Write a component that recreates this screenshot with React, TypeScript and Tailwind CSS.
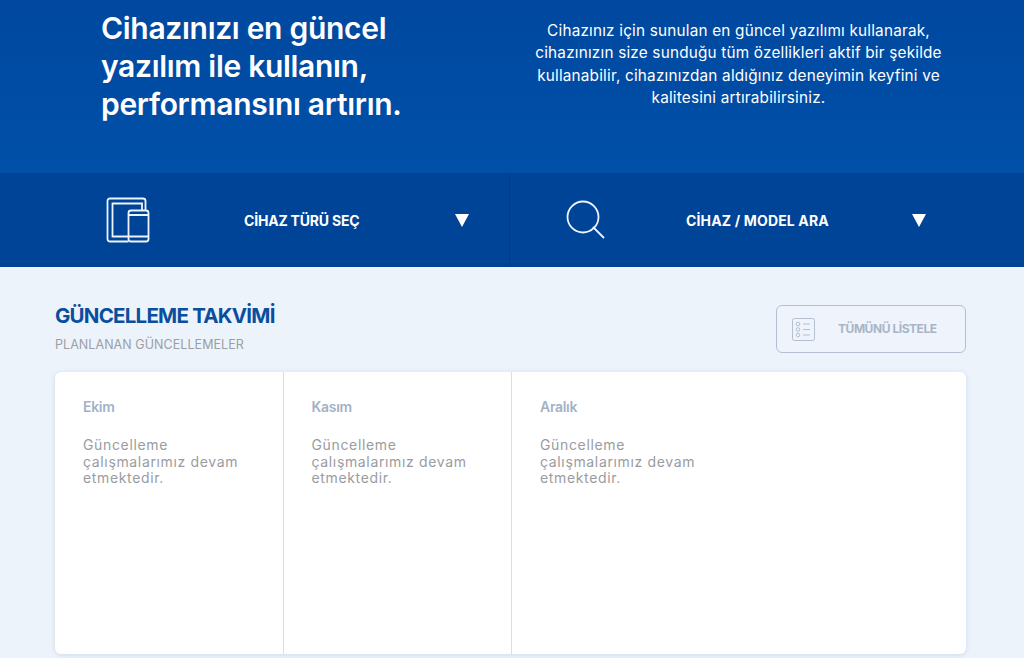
const fontStack = "font-['Inter','Noto_Sans',sans-serif]";

const TabletPhoneIcon = () => (
  <svg width="44" height="46" viewBox="0 0 44 46" fill="none" stroke="#eef4fc" strokeWidth="1.800" className="shrink-0">
    <path d="M22.500 44.500H4a2.500 2.500 0 0 1-2.500-2.500V4A2.500 2.500 0 0 1 4 1.500h33A2.500 2.500 0 0 1 39.500 4v9.500"/>
    <path d="M22.500 39.500H6.500V6.500h29.500v7"/>
    <rect x="22.500" y="13.500" width="20" height="31" rx="2.500"/>
    <path d="M22.500 18h20M22.500 39.500h20"/>
  </svg>
);

const SearchIcon = () => (
  <svg width="40" height="40" viewBox="0 0 40 40" fill="none" stroke="#eef4fc" strokeWidth="1.800" className="shrink-0">
    <circle cx="17" cy="17" r="15.500"/>
    <path d="M27.500 27.500l10 10" strokeLinecap="round"/>
  </svg>
);

const ListIcon = () => (
  <svg width="23" height="23" viewBox="0 0 23 23" fill="none" stroke="#b4bfcf" strokeWidth="1" className="shrink-0">
    <rect x="0.500" y="0.500" width="22" height="22" rx="2"/>
    <circle cx="6" cy="6" r="1.800"/>
    <circle cx="6" cy="11.500" r="1.800"/>
    <circle cx="6" cy="17" r="1.800"/>
    <path d="M11 6h7M11 11.500h7M11 17h7"/>
  </svg>
);

const Triangle = () => (
  <div className="w-0 h-0 border-l-[7.500px] border-r-[7.500px] border-t-[13px] border-l-transparent border-r-transparent border-t-white"/>
);

const months = ["Ekim", "Kasım", "Aralık"];

export default function App() {
  return (
    <div className={`h-[658px] w-[1024px] overflow-hidden bg-[#edf3fb] ${fontStack}`}>
      <header className="h-[173px] bg-gradient-to-b from-[#0048a0] to-[#0050a8] flex text-white">
        <h1 className="ml-[101px] mt-[9px] w-[400px] text-[30px] leading-[38px] font-semibold tracking-[-0.3px]">
          Cihazınızı en güncel<br/>yazılım ile kullanın,<br/>performansını artırın.
        </h1>
        <p className="ml-[7.500px] mt-[20px] w-[460px] text-center text-[15.300px] leading-[22.400px] tracking-[0.2px]">
          Cihazınız için sunulan en güncel yazılımı kullanarak,<br/>
          cihazınızın size sunduğu tüm özellikleri aktif bir şekilde<br/>
          kullanabilir, cihazınızdan aldığınız deneyimin keyfini ve<br/>
          kalitesini artırabilirsiniz.
        </p>
      </header>

      <nav className="h-[94px] bg-[#004497] flex text-white text-[14px] font-bold">
        <div className="w-[510px] flex items-center pl-[106px] border-r border-[#003c88]">
          <TabletPhoneIcon/>
          <span className="ml-[94px] w-[211px] tracking-[-0.2px]">CİHAZ TÜRÜ SEÇ</span>
          <Triangle/>
        </div>
        <div className="flex-1 flex items-center pl-[56px]">
          <SearchIcon/>
          <span className="ml-[80px] w-[226px] tracking-[0.15px]">CİHAZ / MODEL ARA</span>
          <Triangle/>
        </div>
      </nav>

      <main className="px-[55px] pt-[36px]">
        <div className="flex justify-between">
          <div>
            <h2 className="text-[20.500px] leading-[26px] font-bold text-[#0a4f9e] tracking-[-0.77px]">GÜNCELLEME TAKVİMİ</h2>
            <p className="mt-[8px] text-[12.500px] leading-[16px] text-[#9a9fa6] tracking-[0.06px]">PLANLANAN GÜNCELLEMELER</p>
          </div>
          <button className="mt-[2px] mr-[3px] w-[190px] h-[48px] flex items-center pl-[15px] rounded-[6px] border border-[#b4c0d2] bg-[#eff4fc] text-[#a9b5c6] text-[12px] font-bold tracking-[-0.45px]">
            <ListIcon/>
            <span className="ml-[23px]">TÜMÜNÜ LİSTELE</span>
          </button>
        </div>

        <section className="mt-[19px] mr-[3px] h-[282px] flex bg-white rounded-[6px] shadow-[0_1px_5px_rgba(150,170,200,0.35)]">
          {months.map((month, i) => (
            <article
              key={month}
              className={
                i === 0
                  ? "w-[229px] border-r border-[#d8dfe8] pl-[28px] pt-[26px]"
                  : i === 1
                    ? "w-[228px] border-r border-[#d8dfe8] pl-[27.500px] pt-[26px]"
                    : "flex-1 pl-[28px] pt-[26px]"
              }
            >
              <h3 className="text-[14px] leading-[17px] font-semibold text-[#a3b1c6] tracking-[-0.3px]">{month}</h3>
              <p className="mt-[22px] text-[14px] leading-[16.500px] text-[#999c9f] tracking-[0.65px] w-[180px]">
                Güncelleme<br/>çalışmalarımız devam<br/>etmektedir.
              </p>
            </article>
          ))}
        </section>
      </main>
    </div>
  );
}
